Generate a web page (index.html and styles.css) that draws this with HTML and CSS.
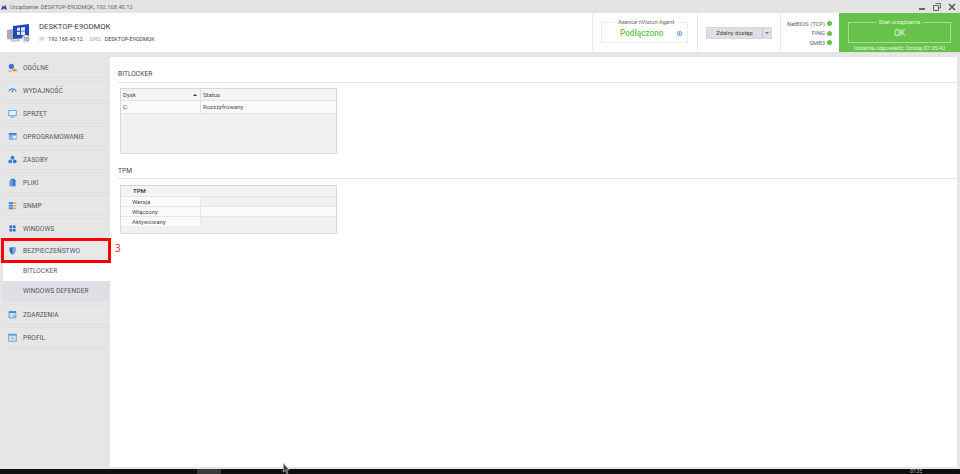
FILE: index.html
```html
<!DOCTYPE html>
<html lang="pl">
<head>
<meta charset="utf-8">
<title>Urządzenie</title>
<link rel="stylesheet" href="styles.css">
</head>
<body>
<div class="app">
  <div class="titlebar">
    <div class="title-left">
      <svg class="app-icon" viewBox="0 0 10 8"><path d="M0 8 3 1l2 3 2-4 3 8H7L5 6 3 8z" fill="#2b4a80"/></svg>
      <span>Urządzenie: DESKTOP-E9ODMQK, 192.168.40.12</span>
    </div>
    <div class="win-btns">
      <svg viewBox="0 0 8 8"><rect x="1" y="5" width="6" height="2" fill="#666"/></svg>
      <svg viewBox="0 0 8 8"><path d="M2.5.5h5v4.500h-1.500M.5 2.500h5v5h-5z" fill="none" stroke="#666"/></svg>
      <svg viewBox="0 0 8 8"><path d="M1 1l6 6M7 1 1 7" stroke="#555" stroke-width="1.500"/></svg>
    </div>
  </div>

  <header class="header">
    <div class="device">
      <svg class="device-icon" viewBox="0 0 24 20">
        <path d="M1 6l6-1v11l-6-1z" fill="#a8aaae"/>
        <path d="M5 16l8-1 2 2-9 1z" fill="#c4c6ca"/>
        <path d="M7 2l16-2v14L7 15z" fill="#1f49b8"/>
        <path d="M11 4l3-.4v3l-3 .4zM15 3.500l4-.5v3.500l-4 .4zM11 8l3-.3v3l-3 .3zM15 7.600l4-.4V11l-4 .3z" fill="#dfe8fa"/>
        <circle cx="20" cy="15" r="4" fill="#e2e4e6"/>
        <text x="20" y="17" class="ten">10</text>
      </svg>
      <div class="device-text">
        <div class="device-name">DESKTOP-E9ODMQK</div>
        <div class="device-meta"><span class="dim">IP:</span><span class="ip">192.168.40.12</span><span class="dim">DNS:</span><span>DESKTOP-E9ODMQK</span></div>
      </div>
    </div>
    <div class="agent-cell">
      <div class="agent">
        <span class="agent-legend">Axence nVision Agent</span>
        <span class="agent-state">Podłączono</span>
        <svg class="info" viewBox="0 0 6 6"><circle cx="3" cy="3" r="2.500" fill="none" stroke="#3f86d8"/><rect x="2.500" y="1.500" width="1" height="3" fill="#3f86d8"/></svg>
      </div>
    </div>
    <div class="remote-cell">
      <div class="remote"><span class="remote-label">Zdalny dostęp</span><span class="remote-arrow"></span></div>
    </div>
    <div class="checks">
      <div class="check">NetBIOS (TCP)<i></i></div>
      <div class="check">PING<i></i></div>
      <div class="check">SMB3<i></i></div>
    </div>
    <div class="status">
      <div class="status-box">
        <span class="status-legend">Stan urządzenia</span>
        <span>OK</span>
      </div>
      <div class="last">Ostatnia odpowiedź: Dzisiaj 07:35:42</div>
    </div>
  </header>

  <div class="body">
    <nav class="side">
      <a class="item"><svg viewBox="0 0 12 12"><circle cx="4.500" cy="4.500" r="3.500" fill="#2f78d4"/><rect x="6" y="8" width="5.500" height="3" fill="#ef8b35"/><rect x="1" y="10" width="4" height="1.500" fill="#ef8b35"/></svg>OGÓLNE</a>
      <a class="item"><svg viewBox="0 0 12 12"><path d="M1 7a5.500 5.500 0 0 1 10 0" fill="none" stroke="#3f86d8" stroke-width="1.500"/><path d="M5 8l2-2" stroke="#2f78d4" stroke-width="1.500"/></svg>WYDAJNOŚĆ</a>
      <a class="item"><svg viewBox="0 0 12 12"><rect x="1" y="2" width="10" height="7" fill="#dff0fb" stroke="#3f96e0"/><rect x="3.500" y="10" width="5" height="1.200" fill="#3f96e0"/></svg>SPRZĘT</a>
      <a class="item"><svg viewBox="0 0 12 12"><rect x="1" y="1.500" width="10.500" height="9" fill="#7fb5ea"/><rect x="1" y="1.500" width="10.500" height="2" fill="#2f78d4"/><rect x="6.500" y="5" width="4" height="3.500" fill="#e8f2fc"/></svg>OPROGRAMOWANIE</a>
      <a class="item"><svg viewBox="0 0 12 12"><circle cx="6" cy="3.500" r="2.500" fill="#2f78d4"/><circle cx="3" cy="8.500" r="2.500" fill="#2f78d4"/><circle cx="9" cy="8.500" r="2.500" fill="#2f78d4"/></svg>ZASOBY</a>
      <a class="item"><svg viewBox="0 0 12 12"><path d="M4 1h4l2 2v8H4z" fill="#2f78d4"/><rect x="2" y="3" width="5" height="8" fill="#5c9de4"/></svg>PLIKI</a>
      <a class="item"><svg viewBox="0 0 12 12"><rect x="1" y="1.500" width="6" height="2.500" fill="#3f86d8"/><rect x="1" y="5" width="6" height="2.500" fill="#3f86d8"/><rect x="1" y="8.500" width="6" height="2.500" fill="#3f86d8"/><rect x="8" y="2" width="3" height="1.500" fill="#ef8b35"/><rect x="8" y="5.500" width="3" height="1.500" fill="#ef8b35"/><rect x="8" y="9" width="3" height="1.500" fill="#ef8b35"/></svg>SNMP</a>
      <a class="item"><svg viewBox="0 0 12 12"><path d="M2 2h3.500v3.500H2zM6.500 2H10v3.500H6.500zM2 6.500h3.500V10H2zM6.500 6.500H10V10H6.500z" fill="#2f68c4"/></svg>WINDOWS</a>
      <div class="active-wrap">
        <a class="item item-current"><svg viewBox="0 0 12 12"><path d="M2 2q4-1 8 0v4q0 3.500-4 5.500Q2 9.500 2 6z" fill="#2f68c4"/><path d="M6 1.300q2 0 4 .7v4q0 3.500-4 5.500z" fill="#7fa9e0"/></svg>BEZPIECZEŃSTWO</a>
        <span class="marker">3</span>
      </div>
      <a class="sub sub-on">BITLOCKER</a>
      <a class="sub">WINDOWS DEFENDER</a>
      <a class="item item-after"><svg viewBox="0 0 12 12"><rect x="1.500" y="2" width="9" height="8.500" fill="#cfe4f8" stroke="#3f86d8"/><rect x="1.500" y="2" width="9" height="2" fill="#3f86d8"/><rect x="6" y="7.500" width="3" height="1" fill="#3f86d8"/></svg>ZDARZENIA</a>
      <a class="item"><svg viewBox="0 0 12 12"><rect x="1" y="1.500" width="10" height="9.500" fill="#cfe4f8" stroke="#4f96de"/><rect x="1" y="1.500" width="10" height="2" fill="#4f96de"/><circle cx="6" cy="7" r="1.500" fill="#7fb5ea"/></svg>PROFIL</a>
    </nav>

    <main class="main">
      <h2 class="section-title">BITLOCKER</h2>
      <div class="grid-box bit">
        <div class="row head"><div class="c1">Dysk<span class="sort"></span></div><div class="c2">Status</div></div>
        <div class="row data"><div class="c1">C:</div><div class="c2">Rozszyfrowany</div></div>
      </div>
      <h2 class="section-title tpm-title">TPM</h2>
      <div class="grid-box tpm">
        <div class="tpm-head">TPM</div>
        <div class="tpm-row"><div class="k">Wersja</div><div class="v grey"></div></div>
        <div class="tpm-row"><div class="k">Włączony</div><div class="v"></div></div>
        <div class="tpm-row"><div class="k">Aktywowany</div><div class="v grey"></div></div>
      </div>
    </main>
  </div>
  <footer class="taskbar">
    <span class="task-active"></span>
    <span class="clock">07:35</span>
  </footer>
  <svg class="cursor" viewBox="0 0 8 12"><path d="M1 0v10l2.200-2 1.500 3.500 1.500-.7L4.700 7.500 7.500 7.500z" fill="#444" stroke="#ddd" stroke-width=".6"/></svg>
</div>
</body>
</html>
```
FILE: styles.css
```css
* { box-sizing: border-box; }
html, body { margin: 0; padding: 0; }
body { width: 960px; height: 474px; overflow: hidden; font-family: Roboto, "Liberation Sans", sans-serif; font-size: 6.500px; color: #4a4a4a; background: #e6e6e6; }
.app { position: relative; width: 960px; height: 474px; display: flex; flex-direction: column; }

.titlebar { height: 13px; background: #e4e4e4; display: flex; align-items: center; justify-content: space-between; padding: 0 4px 0 1px; color: #666; font-size: 5.700px; flex: none; }
.title-left { display: flex; align-items: center; gap: 3px; }
.app-icon { width: 6px; height: 6px; }
.win-btns { display: flex; gap: 7px; }
.win-btns svg { width: 8px; height: 8px; }

.header { height: 39px; background: #fff; display: flex; flex: none; }
.device { width: 592px; display: flex; align-items: center; padding: 0 0 0 6px; }
.device-icon { width: 24px; height: 20px; margin-right: 9px; margin-top: 3px; }
.ten { font-size: 5px; fill: #2a4a80; text-anchor: middle; font-family: Roboto, sans-serif; }
.device-name { font-size: 7.700px; color: #3c3c48; line-height: 10px; margin-bottom: 4px; }
.device-meta { font-size: 5.400px; color: #3c4050; display: flex; line-height: 7px; }
.dim { color: #aaa; margin-right: 3px; }
.ip { margin-right: 7px; }

.agent-cell { width: 105px; border-left: 1px solid #e8e8e8; padding: 8px 0 0 8px; height: 37px; margin-top: 1px; }
.agent { width: 87px; height: 21px; border: 1px solid #ececec; position: relative; }
.agent-legend { position: absolute; left: 13px; top: -4px; padding: 0 3px; background: #fff; font-size: 5.800px; line-height: 7px; color: #666; white-space: nowrap; }
.agent-state { color: #66c24a; font-size: 8.200px; font-weight: 500; position: absolute; left: 18px; top: 4px; line-height: 12px; }
.info { position: absolute; right: 5px; top: 8px; width: 5px; height: 5px; }

.remote-cell { width: 83px; border-left: 1px solid #e8e8e8; padding: 13px 0 0 8px; height: 37px; margin-top: 1px; }
.remote { display: flex; width: 66px; height: 12px; background: #dcdfe6; border: 1px solid #d4d7de; }
.remote-label { flex: 1; text-align: center; font-size: 5.800px; line-height: 10px; color: #444; border-right: 1px solid #c6c9d0; }
.remote-arrow { width: 8px; position: relative; }
.remote-arrow::after { content: ""; position: absolute; left: 2px; top: 4px; border: 2px solid transparent; border-top-color: #777; }

.checks { width: 59px; border-left: 1px solid #e8e8e8; padding-top: 5px; height: 37px; margin-top: 1px; }
.check { display: flex; justify-content: flex-end; align-items: center; height: 9.500px; font-size: 5.800px; color: #666; padding-right: 7px; }
.check i { width: 5px; height: 5px; border-radius: 50%; background: #66c24a; margin-left: 2px; }

.status { width: 121px; background: #66c24a; color: #e6f6df; padding: 9px 9px 0; display: flex; flex-direction: column; }
.status-box { height: 21px; border: 1px solid #a8dd96; display: flex; align-items: center; justify-content: center; font-size: 8.500px; position: relative; }
.status-legend { position: absolute; left: 50%; top: -4px; transform: translateX(-50%); padding: 0 3px; background: #66c24a; font-size: 5.800px; line-height: 7px; white-space: nowrap; }
.status-box span:last-child { margin-top: 1px; }
.last { font-size: 5.600px; white-space: nowrap; text-align: center; margin-top: 2px; line-height: 7px; }

.body { flex: 1; display: flex; padding: 4px 3px 2px 0; border-top: 1px solid #e0e0e0; min-height: 0; }
.side { width: 110px; padding: 0 0 0 2px; background: #e6e6e6; flex: none; }
.item { height: 21px; display: flex; align-items: center; margin: 0 0 2px; padding-left: 5px; border: 1px solid #e0e0e0; border-right: 0; color: #55555f; font-size: 6.500px; letter-spacing: .1px; }
.item svg { width: 9px; height: 9px; margin-right: 6px; flex: none; }
.active-wrap { position: relative; }
.item-current { margin: -1px 0 0 1px; width: 106px; padding-left: 4px; background: #e6e8ea; outline: 3px solid #f00; outline-offset: -1px; border: 1px solid #cfd6d0; }
.marker { position: absolute; left: 113px; top: 1px; color: #e8322c; font-size: 10px; line-height: 14px; font-family: "Noto Sans", sans-serif; }
.sub { display: block; height: 20px; line-height: 20px; padding-left: 21px; font-size: 6.500px; letter-spacing: .1px; background: #dfe0e6; color: #55555f; }
.sub-on { background: #fff; margin-left: 1px; padding-left: 20px; }
.item-after { margin-top: 3px; }

.main { flex: 1; background: #fff; padding: 0 0 0 8px; }
.section-title { margin: 0; font-weight: 400; font-size: 6.700px; line-height: 10px; color: #4a4a4a; padding-top: 12px; height: 26px; border-bottom: 1px solid #e4e4e4; }
.grid-box { margin: 5px 0 0 2px; width: 217px; border: 1px solid #d8d8dc; background: #f0f0f0; font-size: 6px; }
.bit { height: 66px; }
.row { display: flex; height: 12px; border-bottom: 1px solid #e4e4e8; }
.row.head { background: #f4f4f6; }
.row.data { background: #fafafa; height: 13px; border-bottom: 1px solid #e0e0e0; }
.c1 { width: 80px; padding: 0 3px 0 2px; line-height: 12px; border-right: 1px solid #dedee2; position: relative; }
.c2 { flex: 1; padding-left: 2px; line-height: 12px; }
.sort { position: absolute; right: 3px; top: 3px; border: 2px solid transparent; border-bottom-color: #333; }
.tpm-title { height: 25px; padding-top: 12px; }
.tpm { height: 49px; margin-top: 6px; }
.tpm-head { height: 10px; line-height: 10px; padding-left: 12px; font-weight: 700; background: #f4f4f6; }
.tpm-row { display: flex; height: 10px; line-height: 10px; border-top: 1px solid #e6e6ea; background: #fafafa; }
.k { width: 80px; padding-left: 11px; border-right: 1px solid #e6e6ea; }
.v { flex: 1; }
.v.grey { background: #f0f0f0; }

.taskbar { flex: none; height: 5px; background: #0f0f0f; position: relative; display: flex; }
.task-active { width: 24px; height: 5px; margin-left: 197px; background: #3a3a3a; }
.clock { position: absolute; left: 910px; top: 0; color: #bbb; font-size: 5px; line-height: 5px; overflow: hidden; height: 5px; }
.cursor { position: absolute; left: 282px; top: 463px; width: 8px; height: 11px; }
```
